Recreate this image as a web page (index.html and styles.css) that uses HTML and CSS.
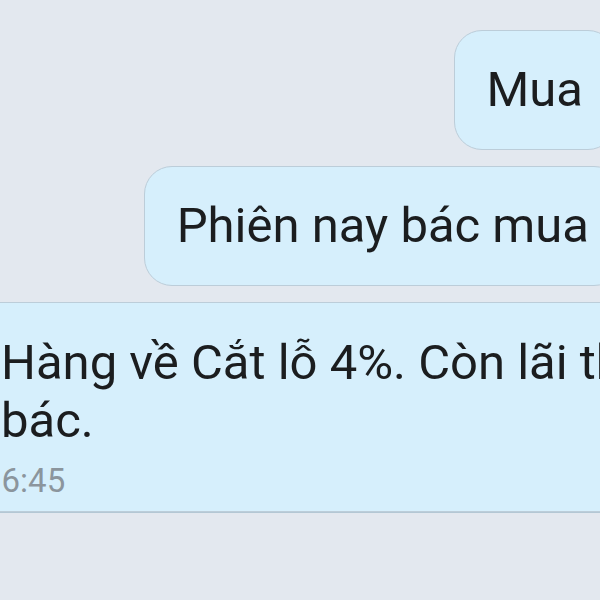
FILE: index.html
```html
<!DOCTYPE html>
<html lang="vi">
<head>
    <meta charset="UTF-8">
    <meta name="viewport" content="width=device-width, initial-scale=1.0">
    <title>Tin nhắn</title>
    <link rel="stylesheet" href="styles.css">
</head>
<body>

<div class="chat">
    <div class="bubble sent short">
        <p class="msg">Mua</p>
    </div>
    <div class="bubble sent">
        <p class="msg">Phiên nay bác mua</p>
    </div>
    <div class="bubble received">
        <p class="msg">Hàng về Cắt lỗ 4%. Còn lãi thì tùy<br>bác.</p>
        <span class="time">16:45</span>
    </div>
</div>

</body>
</html>
```

FILE: styles.css
```css
:root {
    --page-bg: #e3e8ef;
    --bubble-bg: #d6effc;
    --bubble-border: #bccdd9;
    --text-color: #1b1d1f;
    --time-color: #8b959d;
}

html, body {
    height: 100%;
}

body {
    margin: 0;
    overflow: hidden;
    background-color: var(--page-bg);
    font-family: Roboto, 'Noto Sans', sans-serif;
    color: var(--text-color);
}

.chat {
    display: flex;
    flex-direction: column;
    gap: 16px;
    width: 653px;
    margin-left: -31px;
    padding-top: 30px;
}

.bubble {
    background: var(--bubble-bg);
    border: 1px solid var(--bubble-border);
    border-radius: 28px;
    padding: 30px 32px;
}

.sent {
    align-self: flex-end;
}

.short {
    margin-right: 6px;
}

.received {
    align-self: flex-start;
    width: 720px;
    border-radius: 0 28px 28px 0;
    padding-top: 31px;
    padding-bottom: 11px;
    padding-left: 31px;
    box-shadow: 0 1px 0 #b3c7d4;
}

.msg {
    margin: 0;
    font-size: 49px;
    line-height: 58px;
    white-space: nowrap;
}

.time {
    display: block;
    margin-top: 12px;
    margin-left: -18px;
    font-size: 33px;
    line-height: 38px;
    color: var(--time-color);
}
```
